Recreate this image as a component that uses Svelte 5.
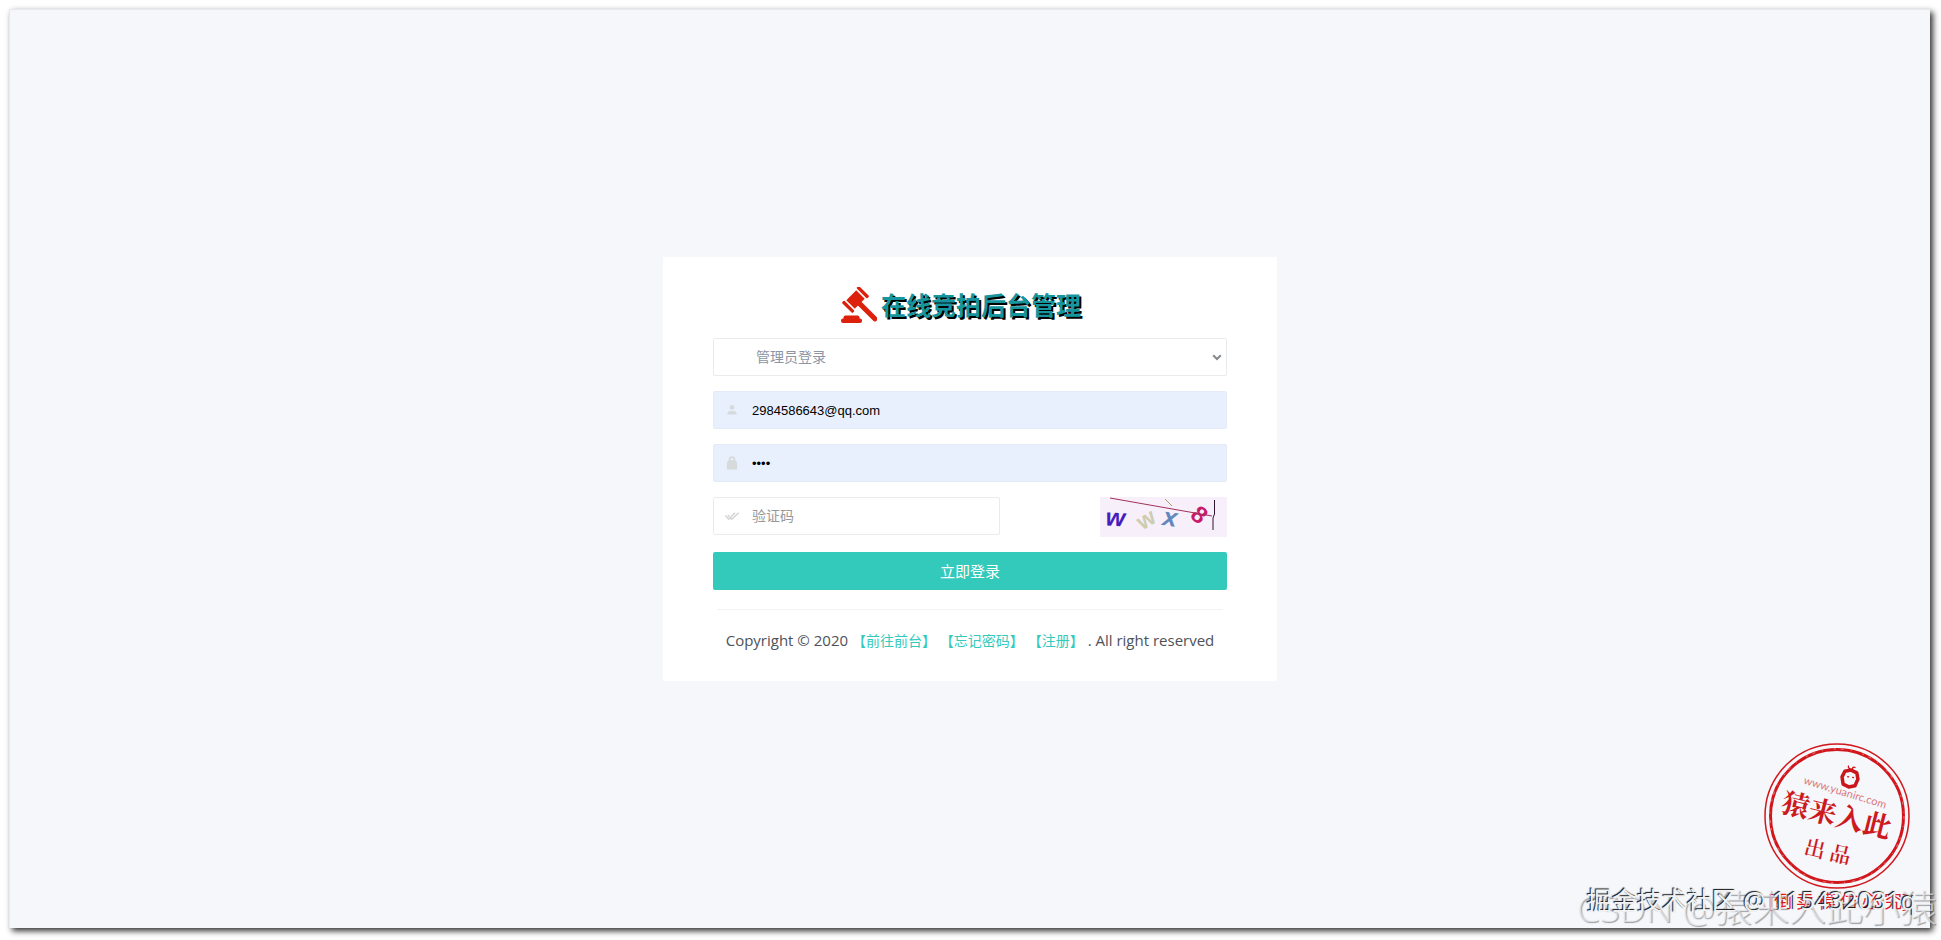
<script lang="ts">
  let role = $state('admin');
  let email = $state('2984586643@qq.com');
  let password = $state('1234');
  let code = $state('');
</script>

<div class="page">
  <main class="screen">
    <form class="card" onsubmit={(e) => e.preventDefault()}>
      <h1>
        <svg class="gavel" viewBox="0 0 36 36" aria-hidden="true">
          <g fill="#dd200b">
            <rect x="0" y="31.5" width="21" height="4.500" rx="2" />
            <rect x="2.500" y="28.500" width="16" height="5" rx="2" />
            <g transform="translate(14.500 12.500) rotate(45)">
              <rect x="0" y="-2.500" width="30" height="5" rx="2.300" />
              <rect x="-6" y="-7" width="12" height="14" />
              <rect x="-7.500" y="-12" width="15" height="3.300" rx="1" />
              <rect x="-7.500" y="8.700" width="15" height="3.300" rx="1" />
            </g>
          </g>
        </svg>
        <span>在线竞拍后台管理</span>
      </h1>

      <div class="field">
        <select class="control role" aria-label="登录类型" bind:value={role}>
          <option value="admin">管理员登录</option>
        </select>
        <svg class="chevron" viewBox="0 0 10 7" aria-hidden="true">
          <path d="M1.2 1.3 5 5 8.8 1.3" fill="none" stroke="#85888d" stroke-width="2" />
        </svg>
      </div>

      <div class="field">
        <svg class="icon" viewBox="0 0 14 14" aria-hidden="true">
          <circle cx="7" cy="4.4" r="2.4" fill="#d5dadd" />
          <path d="M2.5 11.5V10c0-1.6 2.6-2.3 4.5-2.3s4.5.7 4.5 2.3v1.5z" fill="#d5dadd" />
        </svg>
        <input class="control filled" type="text" aria-label="邮箱" bind:value={email} />
      </div>

      <div class="field">
        <svg class="icon" viewBox="0 0 14 14" aria-hidden="true">
          <path d="M4.6 5V3.500a2.400 2.400 0 0 1 4.800 0V5" fill="none" stroke="#d6dadb" stroke-width="1.8" />
          <path d="M3.6 4.200h6.8c1.2 1 1.8 2.600 1.8 4.300v4q0 1-1 1H2.8q-1 0-1-1V8.500c0-1.700.6-3.300 1.800-4.300z" fill="#d6dadb" />
        </svg>
        <input class="control filled" type="password" aria-label="密码" bind:value={password} />
      </div>

      <div class="row">
        <div class="field code">
          <svg class="icon" viewBox="0 0 14 14" aria-hidden="true">
            <path d="m.3 6.500 3.400 3.700L10 3.800M5.300 9l1.400 1.300L13.700 3.800M2.800 6l1.700 1.800" fill="none" stroke="#d3d5d5" stroke-width="1.500" />
          </svg>
          <input class="control" type="text" placeholder="验证码" aria-label="验证码" bind:value={code} />
        </div>
        <button class="captcha" type="button" aria-label="刷新验证码">
          <svg viewBox="0 0 127 40" aria-hidden="true">
            <rect width="127" height="40" fill="#f7f0fb" />
            <g font-family="'Liberation Sans', Arial, sans-serif" font-weight="700" text-anchor="middle">
              <text transform="translate(15 29) rotate(3)" font-size="25" font-style="italic" fill="#471dbd">w</text>
              <text transform="translate(50 29) rotate(-31)" font-size="23" fill="#cdcdb1">w</text>
              <text transform="translate(69 29) rotate(8)" font-size="26" font-style="italic" fill="#6288bd">x</text>
              <text transform="translate(94 24) rotate(40)" font-size="24" fill="#c81a69">8</text>
            </g>
            <path d="M10 1 112 19" stroke="#a32f59" fill="none" />
            <path d="m65 2 7 7" stroke="#aaa150" fill="none" />
            <path d="M114.500 3v14l-1.500 4v12" stroke="#301530" fill="none" />
          </svg>
        </button>
      </div>

      <button class="submit" type="submit">立即登录</button>

      <hr />
      <p class="copyright">
        Copyright © 2020 <a href="#front">【前往前台】</a> <a href="#forgot">【忘记密码】</a> <a href="#register">【注册】</a> . All right reserved
      </p>
    </form>
  </main>

  <svg class="stamp" viewBox="0 0 150 176" aria-hidden="true">
    <g fill="none" stroke="#d2171c">
      <circle cx="75" cy="74" r="72" stroke-width="1.500" />
      <circle cx="75" cy="74" r="66.500" stroke-width="3" />
      <circle cx="75" cy="74" r="67" stroke="#f5f7fb" stroke-width="1" stroke-dasharray="3 7 1 11 2 5" opacity=".45" />
    </g>
    <g transform="translate(88 36) rotate(8)" fill="none" stroke="#c9161b">
      <path d="M-6-6 0-8 6-6 8 0 6 7 0 9-6 7-8 0z" stroke-width="3.500" stroke-linejoin="round" />
      <path d="M-1-9q-3-1-2-3M1-9q0-3 3-2M-3-1h2M2-1h2" stroke-width="1.300" />
    </g>
    <g fill="#cc1a1e" text-anchor="middle">
      <text class="site" transform="translate(82 54) rotate(17)">www.yuanirc.com</text>
      <text class="brand" transform="translate(72 83) rotate(14)">猿来入此</text>
      <text class="made" transform="translate(64 117) rotate(13)">出 品</text>
    </g>
    <text class="notice" x="76" y="166" fill="#df1b1d" text-anchor="middle">[倒 卖 模 仿 必 究]</text>
  </svg>
  <div class="mark csdn">CSDN @猿来入此小猿</div>
  <div class="mark juejin">掘金技术社区 @ 115432031q</div>
</div>

<style>
  :global(body) {
    margin: 0;
    background: #fff;
  }
  .page {
    position: relative;
    box-sizing: border-box;
    min-height: 100vh;
    padding: 9px 11px 12px 9px;
    display: flex;
    overflow: hidden;
    font-family: "Open Sans", "Noto Sans CJK SC", sans-serif;
    color: #4d5259;
  }
  .screen {
    flex: 1;
    display: grid;
    place-items: center;
    background: #f5f7fb;
    border: 1px solid #e8e9ed;
    border-right: 0;
    border-bottom: 0;
    box-shadow: 3px 3px 6px #333;
  }
  .card {
    box-sizing: border-box;
    width: 614px;
    max-width: 100%;
    padding: 28px 50px;
    background: #fff;
  }
  h1 {
    display: flex;
    justify-content: center;
    align-items: center;
    gap: 4px;
    height: 40px;
    margin: 0 0 13px;
    padding-right: 18px;
    font-size: 25px;
    line-height: 40px;
    color: #17959f;
    text-shadow: 2px 2px 0 #000;
  }
  .gavel {
    width: 36px;
    height: 36px;
  }
  .field {
    position: relative;
    margin-bottom: 15px;
  }
  .control {
    display: block;
    box-sizing: border-box;
    width: 100%;
    height: 38px;
    padding: 0 12px 2px 38px;
    border: 1px solid #e9ebed;
    border-radius: 2px;
    background: #fff;
    color: #8b95a5;
    font: 14px "Noto Sans CJK SC", sans-serif;
    outline: none;
  }
  .control::placeholder {
    color: #999;
    opacity: 1;
  }
  .control.filled {
    padding-bottom: 0;
    border-color: #e4ebf6;
    background: #e8f0fe;
    color: #000;
    font: 13px "Liberation Sans", Arial, sans-serif;
  }
  .role {
    appearance: none;
    padding-left: 42px;
  }
  .chevron {
    position: absolute;
    right: 5px;
    top: 16px;
    width: 10px;
    height: 7px;
    pointer-events: none;
  }
  .icon {
    position: absolute;
    left: 12px;
    top: 12px;
    width: 14px;
    height: 14px;
    pointer-events: none;
  }
  .row {
    display: flex;
    justify-content: space-between;
    align-items: flex-start;
    margin-bottom: 15px;
  }
  .code {
    width: 287px;
    margin: 0;
  }
  .captcha {
    width: 127px;
    height: 40px;
    padding: 0;
    border: 0;
    background: none;
    cursor: pointer;
  }
  .captcha svg {
    display: block;
  }
  .submit {
    display: block;
    width: 100%;
    height: 38px;
    padding: 0 0 2px;
    border: 0;
    border-radius: 2px;
    background: #33cabb;
    color: #fff;
    font: 15px "Noto Sans CJK SC", sans-serif;
    cursor: pointer;
  }
  hr {
    height: 1px;
    margin: 19px 4px 18px;
    border: 0;
    background: #f2f2f3;
  }
  .copyright {
    margin: 0;
    text-align: center;
    font-size: 15px;
    line-height: 24px;
    white-space: nowrap;
  }
  .copyright a {
    color: #33cabb;
    font-size: 14px;
    text-decoration: none;
  }
  .stamp {
    position: absolute;
    right: 29px;
    bottom: 22px;
    width: 150px;
    height: 176px;
  }
  .site {
    font: 11px Lato, sans-serif;
    opacity: 0.6;
  }
  .brand {
    font: 700 28px "Noto Serif CJK SC", "Noto Sans CJK SC", serif;
  }
  .made {
    font: 600 21px "Noto Serif CJK SC", "Noto Sans CJK SC", serif;
  }
  .notice {
    font: 18px "Noto Sans CJK SC", sans-serif;
  }
  .mark {
    position: absolute;
    white-space: nowrap;
    line-height: 40px;
  }
  .csdn {
    right: 4px;
    bottom: 12px;
    font-size: 37px;
    font-weight: 300;
    color: rgb(245 247 251 / 60%);
    text-shadow: 1px 1px 1px rgb(70 70 70 / 50%);
  }
  .juejin {
    right: 25px;
    bottom: 20px;
    font-size: 25px;
    color: #f1f2f4;
    text-shadow: -1px -1px 1px #111;
  }
</style>
